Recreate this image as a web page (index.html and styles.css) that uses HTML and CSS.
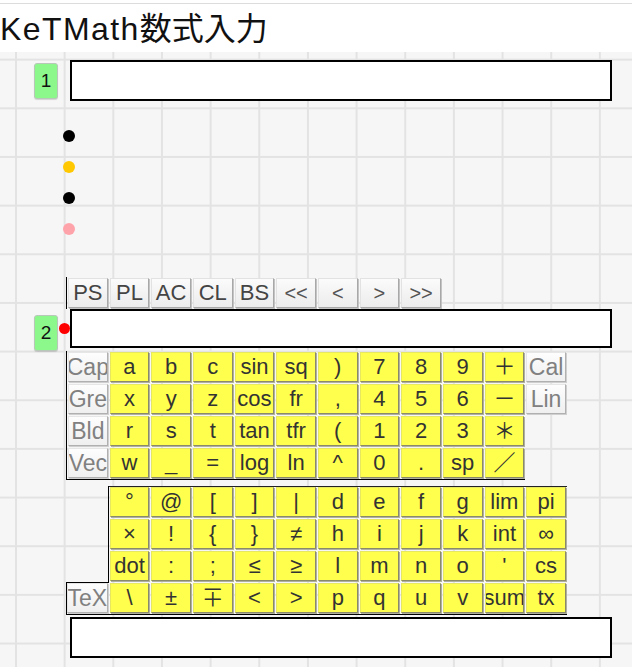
FILE: index.html
```html
<!DOCTYPE html>
<html lang="ja">
<head>
<meta charset="utf-8">
<title>KeTMath数式入力</title>
<link rel="stylesheet" href="styles.css">
</head>
<body>
<header class="header">
  <h1 class="title"><span class="latin">KeTMath</span>数式入力</h1>
</header>
<main class="main">
  <div class="row row1">
    <div class="num">1</div>
    <div class="field field1"></div>
  </div>
  <div class="dots">
    <span class="dot dot-black"></span>
    <span class="dot dot-gold"></span>
    <span class="dot dot-black"></span>
    <span class="dot dot-pink"></span>
  </div>
  <div class="toolbar">
    <div class="cell"><div class="key tool">PS</div></div>
    <div class="cell"><div class="key tool">PL</div></div>
    <div class="cell"><div class="key tool">AC</div></div>
    <div class="cell"><div class="key tool">CL</div></div>
    <div class="cell"><div class="key tool">BS</div></div>
    <div class="cell"><div class="key tool small">&lt;&lt;</div></div>
    <div class="cell"><div class="key tool small">&lt;</div></div>
    <div class="cell"><div class="key tool small">&gt;</div></div>
    <div class="cell"><div class="key tool small">&gt;&gt;</div></div>
  </div>
  <div class="row row2">
    <div class="num num2">2</div>
    <span class="cursor-dot"></span>
    <div class="field field2"></div>
  </div>
  <div class="kb kb1">
    <div class="cell"><div class="key gray">Cap</div></div>
    <div class="cell"><div class="key">a</div></div>
    <div class="cell"><div class="key">b</div></div>
    <div class="cell"><div class="key">c</div></div>
    <div class="cell"><div class="key">sin</div></div>
    <div class="cell"><div class="key">sq</div></div>
    <div class="cell"><div class="key">)</div></div>
    <div class="cell"><div class="key">7</div></div>
    <div class="cell"><div class="key">8</div></div>
    <div class="cell"><div class="key">9</div></div>
    <div class="cell"><div class="key">＋</div></div>
    <div class="cell"><div class="key gray">Cal</div></div>

    <div class="cell"><div class="key gray">Gre</div></div>
    <div class="cell"><div class="key">x</div></div>
    <div class="cell"><div class="key">y</div></div>
    <div class="cell"><div class="key">z</div></div>
    <div class="cell"><div class="key">cos</div></div>
    <div class="cell"><div class="key">fr</div></div>
    <div class="cell"><div class="key">,</div></div>
    <div class="cell"><div class="key">4</div></div>
    <div class="cell"><div class="key">5</div></div>
    <div class="cell"><div class="key">6</div></div>
    <div class="cell"><div class="key">－</div></div>
    <div class="cell"><div class="key gray">Lin</div></div>

    <div class="cell"><div class="key gray">Bld</div></div>
    <div class="cell"><div class="key">r</div></div>
    <div class="cell"><div class="key">s</div></div>
    <div class="cell"><div class="key">t</div></div>
    <div class="cell"><div class="key">tan</div></div>
    <div class="cell"><div class="key">tfr</div></div>
    <div class="cell"><div class="key">(</div></div>
    <div class="cell"><div class="key">1</div></div>
    <div class="cell"><div class="key">2</div></div>
    <div class="cell"><div class="key">3</div></div>
    <div class="cell"><div class="key">＊</div></div>
    <div class="cell empty"></div>

    <div class="cell"><div class="key gray">Vec</div></div>
    <div class="cell"><div class="key">w</div></div>
    <div class="cell"><div class="key">_</div></div>
    <div class="cell"><div class="key">=</div></div>
    <div class="cell"><div class="key">log</div></div>
    <div class="cell"><div class="key">ln</div></div>
    <div class="cell"><div class="key">^</div></div>
    <div class="cell"><div class="key">0</div></div>
    <div class="cell"><div class="key">.</div></div>
    <div class="cell"><div class="key">sp</div></div>
    <div class="cell"><div class="key">／</div></div>
    <div class="cell empty"></div>
  </div>

  <div class="kb kb2">
    <div class="spacer"></div>
    <div class="cell"><div class="key">°</div></div>
    <div class="cell"><div class="key">@</div></div>
    <div class="cell"><div class="key">[</div></div>
    <div class="cell"><div class="key">]</div></div>
    <div class="cell"><div class="key">|</div></div>
    <div class="cell"><div class="key">d</div></div>
    <div class="cell"><div class="key">e</div></div>
    <div class="cell"><div class="key">f</div></div>
    <div class="cell"><div class="key">g</div></div>
    <div class="cell"><div class="key">lim</div></div>
    <div class="cell"><div class="key">pi</div></div>

    <div class="cell"><div class="key">×</div></div>
    <div class="cell"><div class="key">!</div></div>
    <div class="cell"><div class="key">{</div></div>
    <div class="cell"><div class="key">}</div></div>
    <div class="cell"><div class="key">≠</div></div>
    <div class="cell"><div class="key">h</div></div>
    <div class="cell"><div class="key">i</div></div>
    <div class="cell"><div class="key">j</div></div>
    <div class="cell"><div class="key">k</div></div>
    <div class="cell"><div class="key">int</div></div>
    <div class="cell"><div class="key">∞</div></div>

    <div class="cell"><div class="key">dot</div></div>
    <div class="cell"><div class="key">:</div></div>
    <div class="cell"><div class="key">;</div></div>
    <div class="cell"><div class="key">≤</div></div>
    <div class="cell"><div class="key">≥</div></div>
    <div class="cell"><div class="key">l</div></div>
    <div class="cell"><div class="key">m</div></div>
    <div class="cell"><div class="key">n</div></div>
    <div class="cell"><div class="key">o</div></div>
    <div class="cell"><div class="key">'</div></div>
    <div class="cell"><div class="key">cs</div></div>

    <div class="cell tex"><div class="key gray">TeX</div></div>
    <div class="cell"><div class="key">\</div></div>
    <div class="cell"><div class="key">±</div></div>
    <div class="cell"><div class="key">∓</div></div>
    <div class="cell"><div class="key">&lt;</div></div>
    <div class="cell"><div class="key">&gt;</div></div>
    <div class="cell"><div class="key">p</div></div>
    <div class="cell"><div class="key">q</div></div>
    <div class="cell"><div class="key">u</div></div>
    <div class="cell"><div class="key">v</div></div>
    <div class="cell"><div class="key">sum</div></div>
    <div class="cell"><div class="key">tx</div></div>
  </div>

  <div class="field field3"></div>
</main>
</body>
</html>
```
FILE: styles.css
```css
html, body {
  margin: 0;
  padding: 0;
}
body {
  min-height: 667px;
  background-color: #f6f6f6;
  background-image:
    linear-gradient(90deg, #e3e3e3 2px, transparent 2px),
    linear-gradient(#e3e3e3 2px, transparent 2px);
  background-size: 48.67px 48.67px;
  background-position: 15px 10px;
  font-family: "Liberation Sans", "Noto Sans CJK JP", sans-serif;
  color: #000;
  overflow: hidden;
}
.header {
  background: #fff;
  padding-top: 3px;
}
.title {
  margin: 0;
  border-top: 1px solid #dcdcdc;
  height: 48px;
  line-height: 50px;
  font-size: 32px;
  font-weight: normal;
  color: #111;
  white-space: nowrap;
  font-family: "Liberation Sans", "Noto Sans CJK JP", sans-serif;
}
.latin {
  letter-spacing: 1.4px;
}
.main {
  display: block;
}
.row {
  display: flex;
  align-items: flex-start;
}
.row1 {
  margin-top: 8px;
}
.num {
  box-sizing: border-box;
  width: 24px;
  height: 36px;
  margin-left: 34px;
  margin-top: 3px;
  background: #8cf88c;
  border: 1px solid #b8c8b8;
  border-radius: 3px;
  box-shadow: 0 1px 1px rgba(0,0,0,0.15);
  font-size: 19px;
  line-height: 34px;
  text-align: center;
  color: #111;
}
.num2 {
  margin-top: 6px;
}
.field {
  box-sizing: border-box;
  width: 542px;
  border: 2px solid #000;
  background: #fff;
}
.field1 {
  margin-left: 12px;
  height: 41px;
}
.field2 {
  height: 39px;
}
.field3 {
  margin-left: 70px;
  margin-top: 2px;
  height: 41px;
}
.dots {
  display: flex;
  flex-direction: column;
  gap: 19px;
  margin: 29px 0 0 63px;
}
.dot {
  display: block;
  width: 12px;
  height: 12px;
  border-radius: 50%;
}
.dot-black { background: #000; }
.dot-gold { background: #ffc800; }
.dot-pink { background: #ffa3ab; }
.cursor-dot {
  display: block;
  width: 11px;
  height: 11px;
  border-radius: 50%;
  background: #ff0000;
  margin-left: 1px;
  margin-top: 14px;
}
.toolbar {
  display: grid;
  grid-template-columns: repeat(9, 41.667px);
  grid-template-rows: 32px;
  width: 375px;
  margin-top: 42px;
  margin-left: 66px;
  border-left: 1px solid #000;
}
.kb {
  display: grid;
  grid-template-columns: repeat(12, 41.667px);
  grid-auto-rows: 32px;
  margin-left: 66px;
}
.kb1 {
  width: 458.33px;
  border-left: 1px solid #000;
  border-bottom: 1px solid #000;
}
.kb2 {
  grid-template-columns: 42.667px repeat(11, 41.667px);
  width: 501px;
  margin-top: 6px;
  border-bottom: 1px solid #000;
  background: linear-gradient(#222, #222) no-repeat 42.667px 0 / 458.33px 1px;
}
.spacer {
  grid-column: 1;
  grid-row: 1 / 4;
  border-right: 1px solid #000;
}
.cell {
  box-sizing: border-box;
  padding: 1px;
  min-width: 0;
}
.cell.tex {
  border-left: 1px solid #000;
  border-top: 1px solid #000;
  padding: 0 1px 1px 0;
}
.key {
  box-sizing: border-box;
  height: 100%;
  background: #ffff4d;
  border: 1px solid;
  border-color: #e8e860 #8a8a6a #8a8a6a #e8e860;
  box-shadow: 1px 1px 0 #b0b0a0;
  font-size: 22px;
  line-height: 28px;
  text-align: center;
  color: #333;
  white-space: nowrap;
  overflow: hidden;
  display: flex;
  justify-content: center;
}
.key.gray {
  background: linear-gradient(#fdfdfd, #efefef);
  border-color: #e6e6e6 #b0b0b0 #b0b0b0 #e6e6e6;
  box-shadow: 1px 1px 0 #cfcfcf;
  color: #808080;
  font-size: 23px;
}
.key.tool {
  background: linear-gradient(#fbfbfb, #ececec);
  border-color: #e2e2e2 #a8a8a8 #a8a8a8 #e2e2e2;
  box-shadow: 1px 1px 0 #c4c4c4;
  color: #444;
  font-size: 22px;
}
.key.tool.small {
  font-size: 20px;
  color: #555;
}
```
